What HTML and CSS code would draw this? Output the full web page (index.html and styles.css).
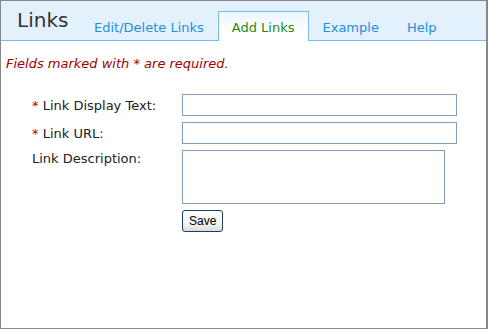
FILE: index.html
```html
<!DOCTYPE html>
<html>
<head>
<meta charset="utf-8">
<link rel="stylesheet" href="styles.css">
</head>
<body>
<div class="panel">
  <div class="header">
    <div class="title">Links</div>
    <div class="tabs">
      <div class="tab">Edit/Delete Links</div>
      <div class="tab active">Add Links</div>
      <div class="tab">Example</div>
      <div class="tab">Help</div>
    </div>
  </div>
  <div class="content">
    <p class="note">Fields marked with * are required.</p>
    <div class="form">
      <label class="label"><span class="req">*</span> Link Display Text:</label>
      <input class="field" type="text">
      <label class="label"><span class="req">*</span> Link URL:</label>
      <input class="field" type="text">
      <label class="label top">Link Description:</label>
      <textarea class="area"></textarea>
      <span></span>
      <div><button class="btn">Save</button></div>
    </div>
  </div>
</div>
</body>
</html>
```

FILE: styles.css
```css
* { box-sizing: border-box; }
html, body { margin: 0; padding: 0; background: #fff; }
body { font-family: "DejaVu Sans", Verdana, sans-serif; }
.panel {
  width: 488px;
  height: 329px;
  border: 1px solid #888;
  border-right-width: 2px;
  display: flex;
  flex-direction: column;
}
.header {
  height: 40px;
  flex: none;
  background: #e3f1fd;
  border-bottom: 1px solid #7ab9ea;
  display: flex;
  align-items: flex-end;
  padding-left: 16px;
}
.title {
  font-size: 20px;
  color: #333;
  align-self: flex-start;
  padding-top: 7px;
  width: 63px;
}
.tabs {
  display: flex;
  margin-bottom: -1px;
}
.tab {
  height: 30px;
  padding: 8px 13px 0;
  border: 1px solid transparent;
  border-bottom: none;
  font-size: 13px;
  color: #1f8ee0;
  white-space: nowrap;
}
.tab.active {
  color: #2a8a12;
  border-color: #7ab9ea;
  background: linear-gradient(#eaf5fe, #fff 60%);
}
.content { padding: 0 0 0 5px; }
.note {
  margin: 15px 0 0;
  font-size: 13px;
  font-style: italic;
  color: #a00000;
}
.form {
  display: grid;
  grid-template-columns: 150px auto;
  row-gap: 6px;
  margin: 23px 0 0 26px;
  align-items: center;
  justify-items: start;
}
.label { font-size: 13px; color: #222; }
.label.top { align-self: start; padding-top: 1px; }
.req { color: #b00000; }
.field {
  width: 275px;
  height: 22px;
  border: 1px solid #7f9db9;
  margin: 0;
  padding: 0 3px;
}
.area {
  width: 263px;
  height: 54px;
  border: 1px solid #7f9db9;
  margin: 0;
  resize: none;
  display: block;
}
.btn {
  font-family: "Liberation Sans", Arial, sans-serif;
  font-size: 12px;
  height: 22px;
  padding: 0 6px;
  border: 1px solid #1c3b6e;
  border-radius: 3px;
  background: linear-gradient(#fefefe, #f2f2ee 70%, #dcdcd6);
  color: #000;
  margin: 0;
}
```
